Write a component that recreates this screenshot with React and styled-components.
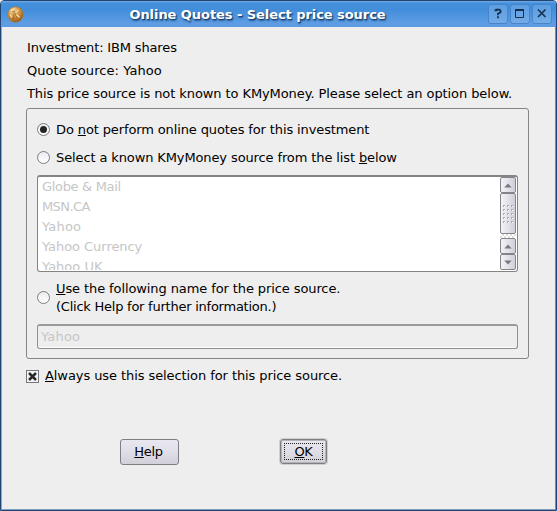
import React from "react";
import styled, { createGlobalStyle } from "styled-components";

const Global = createGlobalStyle`
  * { box-sizing: border-box; }
  body { margin: 0; background: #fff; overflow: hidden; }
`;

const Dialog = styled.div`
  width: 557px;
  height: 511px;
  display: flex;
  flex-direction: column;
  background: #eeeeee;
  border: 1px solid #1f4675;
  border-radius: 4px 4px 0 0;
  box-shadow: inset 1px 0 #7fa9d8, inset -1px 0 #5d8fc6, inset 0 -1px #7d9cbd;
  font: 13px/18px "DejaVu Sans", sans-serif;
  color: #000;
  overflow: hidden;
`;

const TitleBar = styled.header`
  height: 26px;
  flex: none;
  display: flex;
  align-items: center;
  padding: 0 4px 0 6px;
  background: linear-gradient(#69a2df 0, #69a2df 1px, #438fdb 2px, #438edb 9px, #5e9de3 22px, #5c9be2 100%);
`;

const Title = styled.h1`
  flex: 1;
  margin: 0;
  padding: 2px 0 0 3px;
  text-align: center;
  color: #fff;
  font-size: 13px;
  line-height: 18px;
  font-weight: bold;
  letter-spacing: -0.06px;
  text-shadow: 1px 1px 1px #173e6d, 1px 2px 2px #2d5c91;
`;

const TitleButtons = styled.div`
  display: flex;
  gap: 2px;
`;

const TitleButton = styled.button`
  width: 20px;
  height: 20px;
  padding: 0;
  border: 1px solid #4685c9;
  border-radius: 3px;
  background: linear-gradient(#5b9ee2, #74abe7);
  display: grid;
  place-items: center;
`;

const Content = styled.main`
  display: flex;
  flex-direction: column;
  padding: 12px 27px 0 25px;
`;

const Line = styled.span`
  display: block;
  white-space: nowrap;
  letter-spacing: ${(p) => p.$spacing || 0}px;
`;

const Info = styled.div`
  display: flex;
  flex-direction: column;
  gap: 5px;
  padding-left: 1px;
`;

const Mnemonic = styled.span`
  text-decoration: underline;
  text-underline-offset: 1px;
  text-decoration-thickness: 1px;
  text-decoration-skip-ink: none;
`;

const Group = styled.section`
  height: 251px;
  margin-top: 5px;
  padding: 11px 10px 0;
  border: 1px solid #858585;
  border-radius: 3px;
`;

const Option = styled.label`
  display: flex;
  align-items: flex-start;
  gap: 6px;
  padding-top: ${(p) => p.$top}px;
`;

const Radio = styled.span`
  width: 13px;
  height: 13px;
  flex: none;
  margin-top: ${(p) => p.$top}px;
  border: 1px solid #7c7c80;
  border-radius: 50%;
  display: grid;
  place-items: center;
  background: linear-gradient(#eceaef, #fff);
`;

const Dot = styled.span`
  width: 7px;
  height: 7px;
  border-radius: 50%;
  background: #252525;
`;

const ListBox = styled.div`
  height: 97px;
  margin-top: 8px;
  display: flex;
  border: 1px solid #848484;
  border-top-width: 2px;
  border-radius: 3px;
  background: #fff;
  overflow: hidden;
`;

const Items = styled.ul`
  flex: 1;
  height: 93px;
  margin: 0;
  padding: 0 0 0 4px;
  list-style: none;
  color: #c6c6c6;
  line-height: 20px;
  overflow: hidden;
`;

const ScrollBar = styled.div`
  width: 16px;
  height: 93px;
  margin-right: 1px;
  display: flex;
  flex-direction: column;
`;

const ScrollPart = styled.div`
  height: ${(p) => p.$height}px;
  flex: none;
  display: grid;
  place-items: center;
  border: 1px solid #858587;
  border-radius: 2px;
  background: linear-gradient(90deg, #f3f2f7, #e3e2ea 50%, #cfced6);
`;

const Trough = styled.div`
  height: 4px;
  flex: none;
  background: repeating-conic-gradient(#dddddd 0 25%, #fff 0 50%) 0 0 / 4px 4px;
`;

const NameField = styled.div`
  height: 25px;
  margin-top: 8px;
  padding: 2px 3px;
  border: 1px solid #8f8f8f;
  border-top: 2px solid #999;
  border-radius: 3px;
  box-shadow: inset 0 -1px #fff;
  color: #c6c6c6;
`;

const CheckLabel = styled.label`
  display: flex;
  align-items: center;
  gap: 6px;
  margin-top: 8px;
`;

const CheckBox = styled.span`
  width: 13px;
  height: 13px;
  flex: none;
  display: grid;
  place-items: center;
  border: 1px solid #77777b;
  background: #f4f4f6;
`;

const Actions = styled.footer`
  display: flex;
  gap: 101px;
  margin-top: 54px;
  padding-left: 94px;
`;

const ActionButton = styled.button`
  width: ${(p) => p.$width}px;
  height: ${(p) => p.$height}px;
  padding: ${(p) => (p.$focused ? "3px" : "0 2px 0 0")};
  border: 1px solid #7f7f83;
  border-radius: 3px;
  background: linear-gradient(#e9e7f0, #e0dee7 50%, #d1d0d8);
  box-shadow: ${(p) => (p.$focused ? "0 0 0 1px #cfcfcf, inset 0 0 0 1px #b4b4b8" : "none")};
  font: inherit;
  letter-spacing: -0.3px;
  color: #000;
`;

const FocusRing = styled.span`
  display: block;
  height: 17px;
  line-height: 15px;
  border: 1px dotted #222;
`;

const Coin = () => (
  <svg width="17" height="17" viewBox="0 0 17 17">
    <defs>
      <radialGradient id="coin" cx=".35" cy=".25" r=".75">
        <stop offset="0" stopColor="#f5d29a" />
        <stop offset=".5" stopColor="#d99a43" />
        <stop offset="1" stopColor="#9c5e18" />
      </radialGradient>
    </defs>
    <circle cx="8.5" cy="8.5" r="7.7" fill="url(#coin)" stroke="#a77434" strokeWidth=".6" />
    <path d="M5.2 5.5l2-.6-.6 6.8M7.6 8.6l3.6-3.6M8 8.4l2.8 3.8M4.8 12.3h3" fill="none" stroke="#865a2c" strokeWidth="1" opacity=".65" />
    <path d="M3.6 4.6l3.9-1.9M8.7 7l2.6-2.8M9.5 8.5l3 3M3 8.5l2 3" fill="none" stroke="#ffe3b4" strokeWidth="1.1" />
  </svg>
);

const Arrow = ({ down }) => (
  <svg width="8" height="5" viewBox="0 0 8 5">
    <path d={down ? "M.3.5h7.4L4 4.5z" : "M.3 4.5h7.4L4 .5z"} fill="#79797d" />
  </svg>
);

const Grip = () => (
  <svg width="12" height="20" viewBox="0 0 12 20">
    {[0, 1, 2, 3, 4].flatMap((row) =>
      [0, 1, 2].map((col) => (
        <g key={`${row}-${col}`} transform={`translate(${1 + col * 4} ${1 + row * 4})`}>
          <path d="M0 0h2v1H1v1H0z" fill="#acacb2" />
          <path d="M1 1h1v1H1z" fill="#fff" />
        </g>
      ))
    )}
  </svg>
);

const sources = [
  { name: "Globe & Mail", spacing: -0.33 },
  { name: "MSN.CA", spacing: -0.6 },
  { name: "Yahoo", spacing: 0.2 },
  { name: "Yahoo Currency", spacing: -0.05 },
  { name: "Yahoo UK", spacing: 0 },
];

export default function App() {
  return (
    <>
      <Global />
      <Dialog>
        <TitleBar>
          <Coin />
          <Title>Online Quotes - Select price source</Title>
          <TitleButtons>
            <TitleButton aria-label="Help">
              <svg width="18" height="18" viewBox="0 0 18 18">
                <path d="M6.4 6.2V5.3h1V4.6h3.1l1 1v1.6L9 8.8v1.5M9 11.3v1.9" fill="none" stroke="#14304e" strokeWidth="1.8" />
              </svg>
            </TitleButton>
            <TitleButton aria-label="Maximize">
              <svg width="18" height="18" viewBox="0 0 18 18">
                <path d="M4.5 5v7.5h8V5" fill="none" stroke="#14304e" />
                <path d="M4 4h9v2H4z" fill="#14304e" />
              </svg>
            </TitleButton>
            <TitleButton aria-label="Close">
              <svg width="18" height="18" viewBox="0 0 18 18">
                <path d="M5 4.5l7.5 7.5M12.5 4.5L5 12" fill="none" stroke="#14304e" strokeWidth="1.6" />
              </svg>
            </TitleButton>
          </TitleButtons>
        </TitleBar>
        <Content>
          <Info>
            <Line $spacing={-0.15}>Investment: IBM shares</Line>
            <Line $spacing={0.06}>Quote source: Yahoo</Line>
            <Line $spacing={-0.085}>This price source is not known to KMyMoney. Please select an option below.</Line>
          </Info>
          <Group>
            <Option $top={1}>
              <Radio $top={2}><Dot /></Radio>
              <Line $spacing={-0.12}>Do <Mnemonic>n</Mnemonic>ot perform online quotes for this investment</Line>
            </Option>
            <Option $top={10}>
              <Radio $top={2} />
              <Line $spacing={-0.115}>Select a known KMyMoney source from the list <Mnemonic>b</Mnemonic>elow</Line>
            </Option>
            <ListBox>
              <Items>
                {sources.map(({ name, spacing }) => (
                  <li key={name}><Line $spacing={spacing}>{name}</Line></li>
                ))}
              </Items>
              <ScrollBar>
                <ScrollPart $height={16}><Arrow /></ScrollPart>
                <ScrollPart $height={41}><Grip /></ScrollPart>
                <Trough />
                <ScrollPart $height={16}><Arrow /></ScrollPart>
                <ScrollPart $height={16}><Arrow down /></ScrollPart>
              </ScrollBar>
            </ListBox>
            <Option $top={8}>
              <Radio $top={11} />
              <div>
                <Line $spacing={-0.1}><Mnemonic>U</Mnemonic>se the following name for the price source.</Line>
                <Line $spacing={-0.24}>(Click Help for further information.)</Line>
              </div>
            </Option>
            <NameField><Line $spacing={0.2}>Yahoo</Line></NameField>
          </Group>
          <CheckLabel>
            <CheckBox>
              <svg width="11" height="11" viewBox="0 0 11 11">
                <path d="M2 2l7 7M9 2L2 9" stroke="#2a2a2a" strokeWidth="2.5" />
              </svg>
            </CheckBox>
            <Line $spacing={-0.08}><Mnemonic>A</Mnemonic>lways use this selection for this price source.</Line>
          </CheckLabel>
          <Actions>
            <ActionButton $width={59} $height={26}><Mnemonic>H</Mnemonic>elp</ActionButton>
            <ActionButton $width={47} $height={25} $focused>
              <FocusRing><Mnemonic>O</Mnemonic>K</FocusRing>
            </ActionButton>
          </Actions>
        </Content>
      </Dialog>
    </>
  );
}
